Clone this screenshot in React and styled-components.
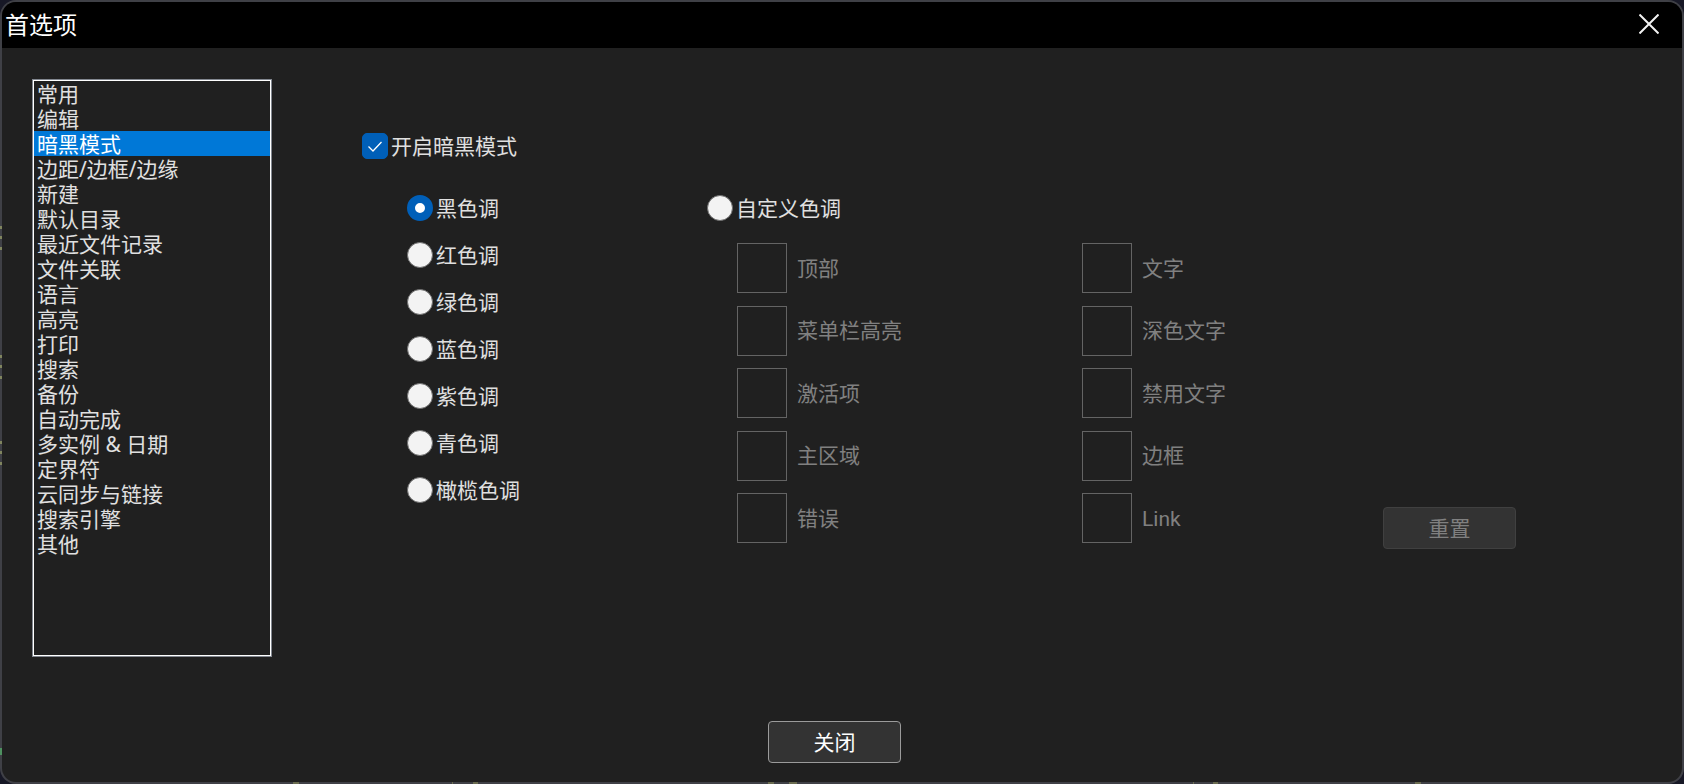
import React, { useState } from "react";
import styled, { createGlobalStyle } from "styled-components";

const GlobalStyle = createGlobalStyle`
  *, *::before, *::after { box-sizing: border-box; }
  body {
    margin: 0;
    background: #171826;
    color: #e0e0e0;
    font: 21px/25px "Noto Sans", "Noto Sans CJK SC", sans-serif;
  }
  button, input, select { font: inherit; margin: 0; }
`;

/* Bits of the editor behind the dialog that shine through its glass border. */
const leftGlints = [226, 236, 247, 355, 365, 376, 441, 451, 462]
  .map((y) => `linear-gradient(#80855f, #80855f) 0 ${y}px / 2px 3px no-repeat border-box`)
  .concat("linear-gradient(#4e9160, #4e9160) 0 748px / 2px 7px no-repeat border-box");
const bottomGlints = [[293, 6], [452, 1], [473, 5], [768, 6], [789, 8], [1193, 1], [1213, 5], [1415, 6]]
  .map(([x, w]) => `linear-gradient(#6a6c50, #6a6c50) ${x}px 100% / ${w}px 2px no-repeat border-box`);

const Dialog = styled.main`
  display: flex;
  flex-direction: column;
  min-height: 100vh;
  border: 2px solid transparent;
  border-radius: 16px;
  background:
    linear-gradient(#202020, #202020) padding-box,
    ${[...leftGlints, ...bottomGlints].join(",")},
    linear-gradient(#3f4046, #3f4046) border-box;
  overflow: hidden;
`;

const TitleBar = styled.header`
  display: flex;
  align-items: center;
  justify-content: space-between;
  height: 46px;
  padding: 0 13px 0 3px;
  background: #000;
`;

const Title = styled.h1`
  margin: 0;
  color: #fff;
  font-size: 24px;
  font-weight: 400;
  line-height: 32px;
`;

const CloseIconButton = styled.button`
  display: grid;
  place-items: center;
  width: 40px;
  height: 44px;
  padding: 0;
  border: 0;
  background: transparent;
  color: #f2f2f2;
  align-self: flex-start;
`;

const Body = styled.div`
  display: flex;
  flex: 1;
  gap: 90px;
  padding: 31px 30px 0;
`;

const CategoryList = styled.select`
  flex: none;
  width: 240px;
  padding: 1px;
  border: 1px solid #828790;
  border-radius: 0;
  outline: 1px solid #fff;
  outline-offset: -2px;
  background: #202020;
  color: #e0e0e0;
  overflow: hidden;
`;

const Category = styled.option`
  display: flex;
  align-items: center;
  height: 25px;
  min-height: 25px;
  padding: 0 3px 2px;
  color: #e0e0e0;

  &:checked {
    background: #0078d7 linear-gradient(#0078d7, #0078d7);
    color: #fff;
  }
`;

const Panel = styled.section`
  flex: 1;
  padding-top: 54px;
`;

const Choice = styled.label`
  display: flex;
  align-items: center;
  gap: 3px;
  height: 26px;
`;

const CheckSlot = styled.span`
  position: relative;
  display: flex;

  svg {
    position: absolute;
    inset: 0;
    pointer-events: none;
  }
`;

const CheckBox = styled.input`
  appearance: none;
  width: 26px;
  height: 26px;
  border: 1px solid #858585;
  border-radius: 5px;
  background: #f3f3f3;

  &:checked {
    border-color: #005fb8;
    background: #005fb8;
  }
`;

const Radio = styled.input`
  appearance: none;
  width: 26px;
  height: 26px;
  border: 1px solid #6e6e6e;
  border-radius: 50%;
  background: #f3f3f3;

  &:checked {
    border: 8px solid #005fb8;
    background: #fff;
  }
`;

const Tones = styled.div`
  display: grid;
  grid-template-columns: 300fr 945fr;
  padding: 36px 0 0 45px;
`;

const PresetTones = styled.div`
  display: flex;
  flex-direction: column;
  gap: 21px;
`;

const CustomColors = styled.div`
  display: grid;
  grid-template-columns: 345fr 301fr 269fr;
  padding: 22px 0 0 30px;
`;

const SwatchColumn = styled.div`
  display: flex;
  flex-direction: column;
  justify-content: space-between;
  height: 300px;
`;

const SwatchRow = styled.div`
  display: flex;
  align-items: center;
  gap: 10px;
`;

const SwatchLabel = styled.label`
  padding-top: 2px;
  color: #808080;
  font-family: Roboto, "Noto Sans CJK SC", sans-serif;
`;

const Swatch = styled.button`
  width: 50px;
  height: 50px;
  padding: 0;
  border: 1px solid #646464;
  background: #202020;
`;

const PushButton = styled.button`
  width: 133px;
  height: 42px;
  padding: 0;
  border: 1px solid #9b9b9b;
  border-radius: 4px;
  background: #333;
  color: #fff;

  &:disabled {
    border-color: #404040;
    color: #808080;
  }
`;

const ResetSlot = styled.div`
  display: flex;
  align-items: flex-end;
  height: 306px;
`;

const Footer = styled.footer`
  display: flex;
  justify-content: center;
  padding: 64px 15px 19px 0;
`;

const categories = [
  "常用", "编辑", "暗黑模式", "边距/边框/边缘", "新建", "默认目录", "最近文件记录",
  "文件关联", "语言", "高亮", "打印", "搜索", "备份", "自动完成", "多实例 & 日期",
  "定界符", "云同步与链接", "搜索引擎", "其他",
];
const presets = ["黑色调", "红色调", "绿色调", "蓝色调", "紫色调", "青色调", "橄榄色调"];
const customTone = "自定义色调";
const swatches = [
  ["顶部", "菜单栏高亮", "激活项", "主区域", "错误"],
  ["文字", "深色文字", "禁用文字", "边框", "Link"],
];

function ToneRadio({ name, tone, onPick }) {
  return (
    <Choice>
      <Radio type="radio" name="tone" checked={tone === name} onChange={() => onPick(name)} />
      {name}
    </Choice>
  );
}

export default function App() {
  const [category, setCategory] = useState("暗黑模式");
  const [enabled, setEnabled] = useState(true);
  const [tone, setTone] = useState("黑色调");
  const locked = tone !== customTone;

  return (
    <>
      <GlobalStyle />
      <Dialog>
        <TitleBar>
          <Title>首选项</Title>
          <CloseIconButton aria-label="关闭">
            <svg width="20" height="20" viewBox="0 0 20 20" fill="none" stroke="currentColor" strokeWidth="2">
              <path d="M0.5 0.5 19.5 19.5M19.5 0.5 0.5 19.5" />
            </svg>
          </CloseIconButton>
        </TitleBar>
        <Body>
          <CategoryList
            size={categories.length}
            aria-label="首选项"
            value={category}
            onChange={(e) => setCategory(e.target.value)}
          >
            {categories.map((name) => (
              <Category key={name} value={name}>{name}</Category>
            ))}
          </CategoryList>
          <Panel>
            <Choice>
              <CheckSlot>
                <CheckBox type="checkbox" checked={enabled} onChange={(e) => setEnabled(e.target.checked)} />
                {enabled && (
                  <svg width="26" height="26" viewBox="0 0 26 26" fill="none" stroke="#fff" strokeWidth="1.3">
                    <path d="M6.5 13.5 11 18 19.5 9" />
                  </svg>
                )}
              </CheckSlot>
              开启暗黑模式
            </Choice>
            <Tones>
              <PresetTones>
                {presets.map((name) => (
                  <ToneRadio key={name} name={name} tone={tone} onPick={setTone} />
                ))}
              </PresetTones>
              <div>
                <ToneRadio name={customTone} tone={tone} onPick={setTone} />
                <CustomColors>
                  {swatches.map((column, index) => (
                    <SwatchColumn key={index}>
                      {column.map((name, row) => (
                        <SwatchRow key={name}>
                          <Swatch id={`swatch-${index}-${row}`} disabled={locked} />
                          <SwatchLabel htmlFor={`swatch-${index}-${row}`}>{name}</SwatchLabel>
                        </SwatchRow>
                      ))}
                    </SwatchColumn>
                  ))}
                  <ResetSlot>
                    <PushButton disabled={locked}>重置</PushButton>
                  </ResetSlot>
                </CustomColors>
              </div>
            </Tones>
          </Panel>
        </Body>
        <Footer>
          <PushButton>关闭</PushButton>
        </Footer>
      </Dialog>
    </>
  );
}
